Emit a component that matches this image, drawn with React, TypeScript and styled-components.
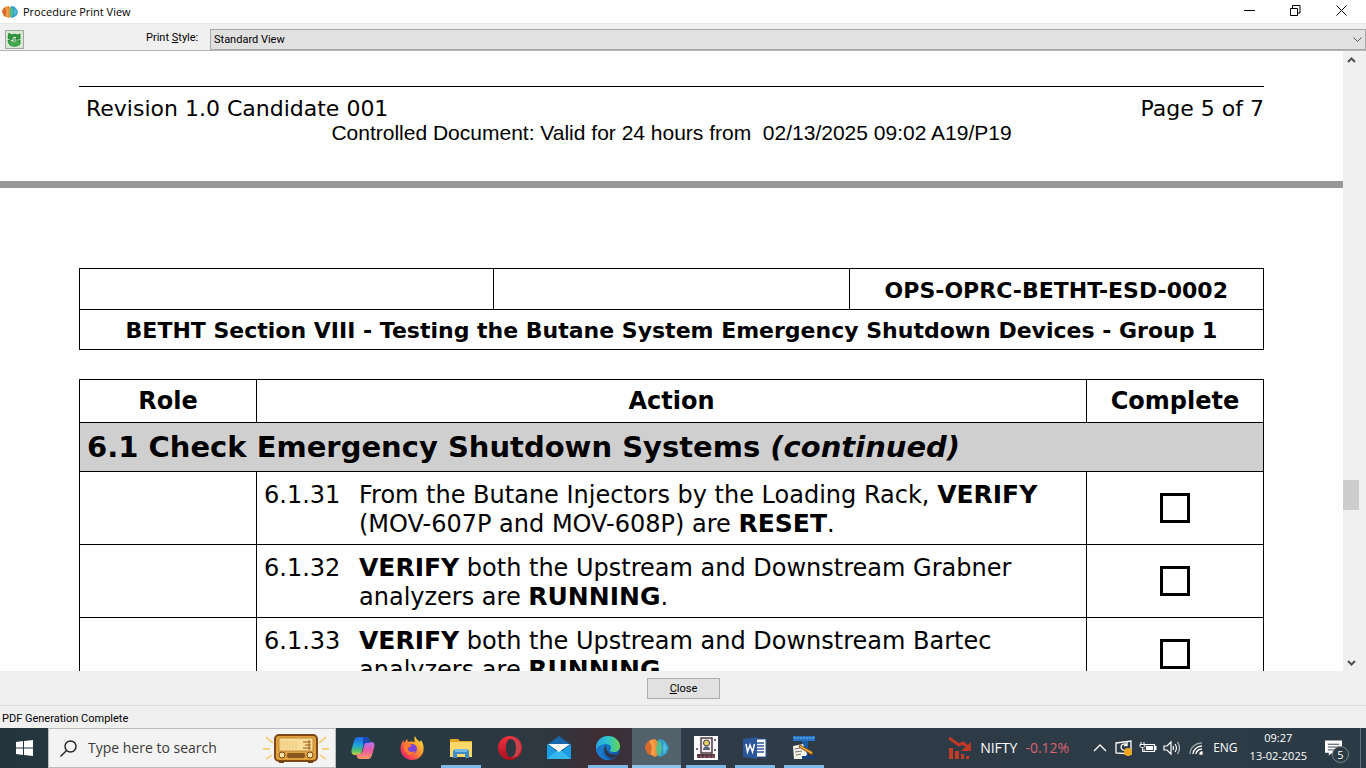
import React from "react";
import styled, { createGlobalStyle, css } from "styled-components";

const docFont = '"DejaVu Sans", Verdana, sans-serif';
const arialFont = '"Liberation Sans", Arial, sans-serif';
const uiFont = 'Roboto, "Liberation Sans", sans-serif';
const shellFont = '"Open Sans", "Segoe UI", sans-serif';

const GlobalStyle = createGlobalStyle`
  *, *::before, *::after { box-sizing: border-box; }
  body { margin: 0; background: #f0f0f0; color: #000; }
  button, input, select { font: inherit; color: inherit; margin: 0; }
  svg { display: block; flex: none; }
`;

const Desktop = styled.div`
  display: flex;
  flex-direction: column;
  height: 100vh;
  overflow: hidden;
  font: 11px/14px ${uiFont};
`;

/* ---------- title bar ---------- */
const TitleBar = styled.header`
  display: flex;
  align-items: center;
  height: 23px;
  padding: 0 2px;
  background: #fff;
`;
const WindowTitle = styled.h1`
  flex: 1;
  margin: 0 0 0 5px;
  font: 400 11px/16px ${shellFont};
`;
const CaptionButton = styled.button`
  display: flex;
  align-items: center;
  align-self: flex-start;
  justify-content: center;
  width: 46px;
  height: 20px;
  padding: 0;
  border: 0;
  background: none;
`;

/* ---------- tool bar ---------- */
const ToolBar = styled.div`
  display: flex;
  align-items: center;
  height: 28px;
  padding: 4px 0 0 5px;
  border-top: 1px solid #e8e8e8;
  border-bottom: 1px solid #b4b4b4;
  background: #f0f0f0;
`;
const RefreshButton = styled.button`
  display: flex;
  align-items: center;
  justify-content: center;
  width: 19px;
  height: 19px;
  padding: 0;
  border: 1px solid #a4a4a4;
  background: #d5e9d0;
`;
const StyleLabel = styled.label`
  width: 64px;
  margin-left: 122px;
  padding-bottom: 3px;
`;
const SelectWrap = styled.div`
  display: flex;
  position: relative;
  flex: 1;
`;
const StyleSelect = styled.select`
  flex: 1;
  height: 21px;
  padding: 1px 20px 0 3px;
  border: 1px solid #a8a8a8;
  border-radius: 0;
  background: #e1e1e1;
  appearance: none;
`;
const SelectArrow = styled.span`
  position: absolute;
  right: 4px;
  top: 8px;
  pointer-events: none;
`;

/* ---------- document ---------- */
const Viewer = styled.main`
  display: flex;
  flex: 1;
  min-height: 0;
`;
const Pages = styled.div`
  flex: 1;
  overflow: hidden;
  background: #fefefe;
  font: 24px/29px ${docFont};
`;
const PageEnd = styled.section`
  height: 130px;
  padding: 35px 79px 0;
`;
const PageBreak = styled.hr`
  height: 7px;
  margin: 0;
  border: 0;
  background: #999;
`;
const PageStart = styled.section`
  padding: 80px 79px 0;
`;
const FooterLine = styled.div`
  display: flex;
  justify-content: space-between;
  padding: 7px 0 0 7px;
  border-top: 1px solid #000;
  font-size: 22px;
`;
const Validity = styled.p`
  margin: 0;
  font: 21px/20px ${arialFont};
  text-align: center;
  white-space: pre;
`;
const DocTable = styled.table`
  width: 100%;
  border-collapse: collapse;
  table-layout: fixed;
  th, td { border: 1px solid #000; padding: 0; }
`;
const HeadingTable = styled(DocTable)`
  margin-bottom: 29px;
  font-size: 22px;
  th { padding: 7px 0 4px; white-space: nowrap; }
  tr + tr th { padding: 6px 0 4px; }
`;
const Column = styled.col<{ $width?: string }>`
  width: ${(p) => p.$width ?? "auto"};
`;
const ColumnHead = styled.th`
  && { padding: 7px 0 6px; }
`;
const SectionHead = styled.th`
  && { padding: 7px 7px 6px; }
  background: #d0cfd0;
  font-size: 29px;
  line-height: 35px;
  text-align: left;
`;
const ActionCell = styled.td`
  vertical-align: top;
`;
const Step = styled.div`
  display: flex;
  padding: 9px 7px 5px;
  b { font-size: 25px; line-height: 25px; }
`;
const StepNumber = styled.span`
  flex: none;
  width: 95px;
`;
const CheckCell = styled.td`
  vertical-align: middle;
`;
const Check = styled.input`
  display: block;
  width: 30px;
  height: 30px;
  margin: 0 auto;
  border: 3px solid #000;
  background: #fff;
  appearance: none;
`;

/* ---------- scroll bar ---------- */
const ScrollBar = styled.div`
  display: flex;
  flex-direction: column;
  width: 23px;
  padding-right: 7px;
  background: #f0f0f0;
`;
const ScrollButton = styled.button`
  display: flex;
  align-items: center;
  justify-content: center;
  height: 17px;
  padding: 0;
  border: 0;
  background: none;
`;
const Track = styled.div`
  display: flex;
  flex-direction: column;
  flex: 1;
`;
const TrackGap = styled.div<{ $grow: number }>`
  flex: ${(p) => p.$grow};
`;
const Thumb = styled.div`
  height: 30px;
  background: #cdcdcd;
`;

/* ---------- bottom of the window ---------- */
const ActionBar = styled.div`
  display: flex;
  align-items: center;
  justify-content: center;
  height: 35px;
  border-bottom: 1px solid #dcdcdc;
`;
const CloseButton = styled.button`
  width: 73px;
  height: 21px;
  padding: 1px 0 0 1px;
  border: 1px solid #adadad;
  background: #e1e1e1;
`;
const StatusBar = styled.footer`
  height: 22px;
  padding: 6px 2px 0;
`;

/* ---------- task bar ---------- */
const TaskBar = styled.nav`
  display: flex;
  align-items: stretch;
  height: 40px;
  background: linear-gradient(90deg, #24353e 0, #283a42 28%, #2e3841 40%, #402c33 44%, #2f3b46 49%, #2b3b46 100%);
  color: #fff;
  font: 12px/18px ${shellFont};
`;
const StartButton = styled.button`
  display: flex;
  align-items: center;
  justify-content: center;
  width: 48px;
  padding: 0;
  border: 0;
  background: none;
`;
const SearchBox = styled.label`
  display: flex;
  align-items: center;
  width: 288px;
  margin-right: 2px;
  padding: 0 4px 0 11px;
  border: 1px solid #b8bcbe;
  background: #f3f3f3;
  color: #333;
`;
const SearchInput = styled.input`
  flex: 1;
  min-width: 0;
  margin-left: 11px;
  padding: 0;
  border: 0;
  outline: 0;
  background: none;
  font-size: 14px;
  &::placeholder { color: #3a3a3a; opacity: 1; }
`;
const TaskButton = styled.button<{ $open?: boolean; $active?: boolean }>`
  display: flex;
  align-items: center;
  justify-content: center;
  width: 49px;
  padding: 0 4px;
  border: 0;
  background: none;
  ${(p) => p.$open && css`
    background: linear-gradient(#7db9e8, #7db9e8) bottom / 40px 3px no-repeat;
  `}
  ${(p) => p.$active && css`
    background: linear-gradient(#8ac4ee, #8ac4ee) bottom / 49px 3px no-repeat, #53616a;
  `}
`;
const Tray = styled.div`
  display: flex;
  align-items: center;
  margin-left: auto;
`;
const NewsButton = styled.button`
  display: flex;
  align-items: center;
  gap: 8px;
  margin-right: 19px;
  padding: 0;
  border: 0;
  background: none;
  font-size: 14px;
`;
const Change = styled.span`
  color: #d9646f;
`;
const TrayIcons = styled.div`
  display: grid;
  grid-auto-flow: column;
  grid-auto-columns: 24px;
  align-items: center;
  justify-items: center;
`;
const Language = styled.span`
  margin-left: 5px;
`;
const Clock = styled.time`
  margin-left: 12px;
  padding-bottom: 2px;
  font-size: 11px;
  text-align: center;
`;
const NoticeButton = styled.button`
  display: flex;
  align-items: flex-start;
  position: relative;
  width: 30px;
  height: 40px;
  margin: 0 6px 0 17px;
  padding: 12px 0 0 1px;
  border: 0;
  background: none;
`;
const NoticeCount = styled.span`
  position: absolute;
  right: 5px;
  top: 18px;
  width: 17px;
  height: 17px;
  border: 1px solid #7b868c;
  border-radius: 50%;
  background: #2c3a44;
  font-size: 11px;
  line-height: 15px;
`;
const PeekEdge = styled.span`
  width: 6px;
  align-self: stretch;
  border-left: 1px solid #65717a;
`;

/* ---------- drawings ---------- */
const AppLogo = ({ size }: { size: number }) => (
  <svg width={size} height={size} viewBox="0 0 24 24">
    <path d="M10 3l3 3v13l-3 2-4-2-3-1-2-4-1-3 2-4 3-3z" fill="#ef8f35" />
    <path d="M4 5l3 5-1 9-3-1-3-7 2-4z" fill="#d9692c" />
    <path d="M8 4l2 8-1 8-3-2 1-7-2-6z" fill="#f3a04c" />
    <path d="M14 3l5 1 3 4 2 4-2 5-4 3-4 1-2-3V6z" fill="#2f9fc6" />
    <path d="M13 4l3 3 1 6-2 7-3-2-1-6z" fill="#58bd8d" />
    <path d="M19 6l3 6-3 6-1-6z" fill="#55bfe2" />
  </svg>
);
const RefreshIcon = () => (
  <svg width="15" height="15" viewBox="0 0 15 15">
    <path d="M2 1l2 2c2-1 5-1 7 0l2-1v5H9l1-2c-2-1-4-1-5 1L4 8 1 6z" fill="#2c9b3a" stroke="#116b20" strokeWidth=".7" />
    <path d="M13 8v4c-3 3-8 3-11 0L1 8l3 1c1 2 5 3 7 0z" fill="#41b04d" stroke="#116b20" strokeWidth=".7" />
    <path d="M5 7h5v2H6" fill="none" stroke="#1f8b2f" />
  </svg>
);
const Radio = () => (
  <svg width="70" height="36" viewBox="0 0 70 36">
    <g stroke="#f3d384" strokeWidth="2" fill="none">
      <path d="M5 7l7 6M2 19h7M5 29l6-4M65 7l-7 6M68 19h-7M65 29l-6-4" />
    </g>
    <rect x="14" y="5" width="42" height="26" rx="4" fill="#dfa13c" stroke="#7d4816" strokeWidth="2" />
    <rect x="18" y="8" width="34" height="13" rx="1" fill="#f8dc97" stroke="#c08a3c" />
    <path d="M20 11v8M23 11v8M26 11v8M29 11v8M32 11v8M35 11v8" stroke="#eac678" />
    <path d="M42 12h8M44 15h6M42 18h8M48 10v10" stroke="#9b5a1e" />
    <circle cx="21" cy="25" r="3" fill="#fbe2a0" stroke="#7d4816" />
    <circle cx="49" cy="25" r="3" fill="#fbe2a0" stroke="#7d4816" />
    <rect x="26" y="23" width="18" height="5" rx="2" fill="#8b5821" />
    <path d="M18 31v2h5v-2M47 31v2h5v-2" fill="#6b3e14" />
  </svg>
);
const Copilot = () => (
  <svg width="24" height="24" viewBox="0 0 24 24">
    <defs>
      <linearGradient id="cpA" x1="0" y1="0" x2="0" y2="1"><stop stopColor="#2268e0" /><stop offset=".45" stopColor="#20a0e0" /><stop offset=".75" stopColor="#4cc06c" /><stop offset="1" stopColor="#d8d040" /></linearGradient>
      <linearGradient id="cpB" x1="0" y1="0" x2="0" y2="1"><stop stopColor="#b070f0" /><stop offset=".5" stopColor="#ee5ba4" /><stop offset="1" stopColor="#fb9a5e" /></linearGradient>
    </defs>
    <path d="M7 1h8c3 0 3 3 4 6h-3c-2 0-3 1-4 4l-1 4c-1 3-2 4-4 4H4c-4 0-4-4-3-7l2-7c1-3 2-4 4-4z" fill="url(#cpA)" />
    <path d="M17 23H9c-3 0-3-3-4-5h3c2 0 3-1 4-4l1-4c1-3 2-4 4-4h3c4 0 4 3 3 6l-2 7c-1 3-2 4-4 4z" fill="url(#cpB)" />
    <path d="M12 1h3c3 0 3 3 4 6h-3c-2 0-3 0-4 3z" fill="#1b4bb8" />
  </svg>
);
const Firefox = () => (
  <svg width="24" height="24" viewBox="0 0 24 24">
    <defs><linearGradient id="ff" x1="1" y1="0" x2="0" y2="1"><stop stopColor="#fff04a" /><stop offset=".4" stopColor="#ff9a2a" /><stop offset=".75" stopColor="#ff3b57" /><stop offset="1" stopColor="#e01f8c" /></linearGradient></defs>
    <path d="M15 0c1 3 3 4 5 6l1-2c2 3 3 6 2.500 10C23 20 18 24 12 24S.5 19 .5 12.500C.5 9 2 6 3.500 4L4 7l3-4 1 3c3-1 6 0 7 0-1-2-1-4 0-6z" fill="url(#ff)" />
    <circle cx="12" cy="13" r="5" fill="#7a45dc" />
    <path d="M4 9c3-2 5 0 8 0-1 2-4 2-4 4 0 3 4 4 7 2-1 4-6 5-9 2-2-2-2-5-2-8z" fill="#ff7d2c" />
  </svg>
);
const Explorer = () => (
  <svg width="24" height="24" viewBox="0 0 24 24">
    <path d="M1 3h8l2 2h12v6H1z" fill="#e5a823" />
    <path d="M1 6h22v15H1z" fill="#fbd867" />
    <path d="M6 13h12l2 2v7h-4v-4H8v4H4v-7z" fill="#3f8dcb" />
    <path d="M6 13h12v3H6z" fill="#75b9e6" />
  </svg>
);
const Opera = () => (
  <svg width="24" height="24" viewBox="0 0 24 24">
    <defs><linearGradient id="op" x1="0" y1="0" x2="0" y2="1"><stop stopColor="#f5323f" /><stop offset="1" stopColor="#a80f1e" /></linearGradient></defs>
    <path fillRule="evenodd" d="M12 0a12 12 0 1 1 0 24a12 12 0 1 1 0-24zM13 3c-4 0-5 5-5 9s1 9 5 9 5-5 5-9-1-9-5-9z" fill="url(#op)" />
    <path d="M13 3c4 0 5 5 5 9s-1 9-5 9c4 2 10-3 10-9S17 1 13 3z" fill="#c9424c" />
  </svg>
);
const Mail = () => (
  <svg width="26" height="24" viewBox="0 0 26 24">
    <path d="M1 9L13 0l12 9v4H1z" fill="#1767ad" />
    <path d="M1 8l12 9L25 8v15H1z" fill="#1a9ce2" />
    <path d="M1 23l12-10 12 10z" fill="#35b8f1" />
    <path d="M2 8h22L13 16z" fill="#f6f8f8" />
  </svg>
);
const Edge = () => (
  <svg width="26" height="26" viewBox="0 0 26 26">
    <defs>
      <linearGradient id="edA" x1="0" y1="0" x2="1" y2="0"><stop stopColor="#2aa5e2" /><stop offset=".5" stopColor="#2cc3cf" /><stop offset="1" stopColor="#65d74b" /></linearGradient>
      <linearGradient id="edB" x1="0" y1="0" x2="1" y2="1"><stop stopColor="#1a94dd" /><stop offset="1" stopColor="#1249a2" /></linearGradient>
    </defs>
    <circle cx="13" cy="13" r="12" fill="url(#edB)" />
    <path d="M1 13C1 6 6 1 13 1s12 5 12 10c0 4-3 6-6 6-3 0-5-1-4-2 2-2 1-6-4-6-5 0-9 3-10 7z" fill="url(#edA)" />
    <path d="M11 10c-4 4-1 12 5 13 3 0 6-2 7-4-3 1-8 1-10-2-2-2-2-5-2-7z" fill="#2b3543" />
    <path d="M9 11c-4 5-1 12 6 14-7 1-13-4-14-11 2-3 5-4 8-3z" fill="#1b78cb" />
  </svg>
);
const Wizard = () => (
  <svg width="24" height="24" viewBox="0 0 24 24">
    <path fill="#fafafa" d="M0 0h24v24H0z" />
    <path d="M7 2h11v15H7z" fill="#f4ecec" stroke="#4c3b45" strokeWidth="1.500" />
    <circle cx="12.500" cy="7" r="3" fill="#e7cf62" stroke="#383b4a" />
    <path d="M9 14c0-5 7-5 7 0z" fill="#59657a" />
    <path d="M3 18h18v4H3z" fill="#84505b" />
    <path d="M3 19h18M5 22v-4M9 22v-4M13 22v-4M17 22v-4" stroke="#3b2a38" />
    <path d="M2 12h2v2H2zM20 3h2v2h-2zM20 13h2v2h-2z" fill="#77647f" />
  </svg>
);
const Word = () => (
  <svg width="24" height="22" viewBox="0 0 24 22">
    <path d="M11 2h12v18H11z" fill="#fff" stroke="#2b579a" />
    <path d="M14 6h7M14 9h7M14 12h7M14 15h7" stroke="#2b579a" strokeWidth="1.400" />
    <path d="M0 2L14 0v22L0 20z" fill="#2b579a" />
    <path d="M3 7l1.500 8L7 8l2.500 7L11.500 7" fill="none" stroke="#fff" strokeWidth="1.500" />
  </svg>
);
const Drafting = () => (
  <svg width="24" height="24" viewBox="0 0 24 24">
    <path d="M1 0h22v5H1z" fill="#2573c3" />
    <path d="M2 2h20" stroke="#7cbcf1" strokeDasharray="2 1" />
    <path d="M10 5h6v18h-6z" fill="#1c5ba5" />
    <path d="M1 10l10-2 4 10-3 5H2z" fill="#f4f1e7" />
    <path d="M3 13l5-1M3 16l7-1M4 19l5-1" stroke="#737373" />
    <path d="M8 9l13 7-1 3L7 11z" fill="#f0a22f" stroke="#633b16" strokeWidth=".8" />
    <path d="M10 20h13v3H10z" fill="#16407b" />
  </svg>
);
const Falling = () => (
  <svg width="24" height="24" viewBox="0 0 24 24">
    <path d="M1 2l10 7 4-2 6 5" fill="none" stroke="#bf3828" strokeWidth="3" />
    <path d="M23 6v9H13z" fill="#bf3828" />
    <path d="M1 12h4v11H1zM7 15h4v8H7zM13 18h3v5h-3zM18 20h3v3h-3z" fill="#c23b22" />
  </svg>
);
const Sync = () => (
  <svg width="18" height="18" viewBox="0 0 18 18" fill="none" stroke="#fff" strokeWidth="1.300">
    <path d="M1 4l15-2v13L1 14z" />
    <path d="M12 6c-2-2-6-1-6 2s3 4 5 3M12 3v3.500H9" />
    <circle cx="13" cy="13" r="4" fill="#f2a51e" stroke="none" />
  </svg>
);
const Battery = () => (
  <svg width="18" height="16" viewBox="0 0 18 16">
    <path d="M6 4.500h9.500v7H5V9" fill="none" stroke="#fff" strokeWidth="1.200" />
    <path d="M7 6h7v4H7zM16 6h1.500v4H16z" fill="#fff" />
    <path d="M2 2v2M5 2v2M1 4.500h5V6c0 2-5 2-5 0zM3.500 8v3.500H5" fill="#2b3b46" stroke="#fff" />
  </svg>
);
const Speaker = () => (
  <svg width="18" height="16" viewBox="0 0 18 16" fill="none" stroke="#fff" strokeWidth="1.200">
    <path d="M1 6h3l4-4v12l-4-4H1zM10 6q1 2 0 4M12 4q3 4 0 8" />
    <path d="M14.500 2q4 6 0 12" stroke="#bcc3c7" />
  </svg>
);
const Wifi = () => (
  <svg width="15" height="16" viewBox="0 0 15 16" fill="none" strokeWidth="1.300">
    <path d="M1 14C1 8 6 3 13 3" stroke="#98a3a9" />
    <path d="M4 14c0-4 4-8 9-8M7 14c0-3 3-5 6-5" stroke="#fff" />
    <path d="M11 14c0-1 1-2 2-2v2z" fill="#fff" stroke="#fff" />
  </svg>
);

interface StepRow {
  id: string;
  text: React.ReactNode;
}
const steps: StepRow[] = [
  { id: "6.1.31", text: <>From the Butane Injectors by the Loading Rack, <b>VERIFY</b><br />(MOV-607P and MOV-608P) are <b>RESET</b>.</> },
  { id: "6.1.32", text: <><b>VERIFY</b> both the Upstream and Downstream Grabner<br />analyzers are <b>RUNNING</b>.</> },
  { id: "6.1.33", text: <><b>VERIFY</b> both the Upstream and Downstream Bartec<br />analyzers are <b>RUNNING</b>.</> },
];

interface Task {
  name: string;
  icon: React.ReactNode;
  open?: boolean;
  active?: boolean;
}
const tasks: Task[] = [
  { name: "Copilot", icon: <Copilot /> },
  { name: "Firefox", icon: <Firefox /> },
  { name: "File Explorer", icon: <Explorer />, open: true },
  { name: "Opera", icon: <Opera /> },
  { name: "Mail", icon: <Mail /> },
  { name: "Edge", icon: <Edge />, open: true },
  { name: "Procedure Print View", icon: <AppLogo size={24} />, open: true, active: true },
  { name: "Wizard", icon: <Wizard />, open: true },
  { name: "Word", icon: <Word />, open: true },
  { name: "Drafting", icon: <Drafting />, open: true },
];

export default function App() {
  return (
    <Desktop>
      <GlobalStyle />
      <TitleBar>
        <AppLogo size={16} />
        <WindowTitle>Procedure Print View</WindowTitle>
        <CaptionButton aria-label="Minimize">
          <svg width="11" height="11"><path d="M0 5.500h11" stroke="#000" /></svg>
        </CaptionButton>
        <CaptionButton aria-label="Restore">
          <svg width="11" height="11" fill="none" stroke="#000"><path d="M.5 3.500h7v7h-7zM2.500 3V.5h7.500v7.500H8" /></svg>
        </CaptionButton>
        <CaptionButton aria-label="Close window">
          <svg width="11" height="11"><path d="M.5.5l10 10M10.500.5l-10 10" stroke="#000" /></svg>
        </CaptionButton>
      </TitleBar>

      <ToolBar>
        <RefreshButton aria-label="Refresh"><RefreshIcon /></RefreshButton>
        <StyleLabel htmlFor="print-style">Print <u>S</u>tyle:</StyleLabel>
        <SelectWrap>
          <StyleSelect id="print-style" defaultValue="standard">
            <option value="standard">Standard View</option>
          </StyleSelect>
          <SelectArrow>
            <svg width="9" height="6"><path d="M.5.5l4 4 4-4" fill="none" stroke="#555" /></svg>
          </SelectArrow>
        </SelectWrap>
      </ToolBar>

      <Viewer>
        <Pages>
          <PageEnd>
            <FooterLine>
              <span>Revision 1.0 Candidate 001</span>
              <span>Page 5 of 7</span>
            </FooterLine>
            <Validity>{"Controlled Document: Valid for 24 hours from  02/13/2025 09:02 A19/P19"}</Validity>
          </PageEnd>
          <PageBreak />
          <PageStart>
            <HeadingTable>
              <colgroup><Column $width="35%" /><Column $width="30%" /><Column $width="35%" /></colgroup>
              <tbody>
                <tr><td /><td /><th>OPS-OPRC-BETHT-ESD-0002</th></tr>
                <tr><th colSpan={3}>BETHT Section VIII - Testing the Butane System Emergency Shutdown Devices - Group 1</th></tr>
              </tbody>
            </HeadingTable>
            <DocTable>
              <colgroup><Column $width="177px" /><Column /><Column $width="177px" /></colgroup>
              <thead>
                <tr><ColumnHead>Role</ColumnHead><ColumnHead>Action</ColumnHead><ColumnHead>Complete</ColumnHead></tr>
              </thead>
              <tbody>
                <tr><SectionHead colSpan={3}>6.1 Check Emergency Shutdown Systems <em>(continued)</em></SectionHead></tr>
                {steps.map((s) => (
                  <tr key={s.id}>
                    <td />
                    <ActionCell>
                      <Step><StepNumber>{s.id}</StepNumber><span>{s.text}</span></Step>
                    </ActionCell>
                    <CheckCell><Check type="checkbox" aria-label={`${s.id} complete`} /></CheckCell>
                  </tr>
                ))}
              </tbody>
            </DocTable>
          </PageStart>
        </Pages>
        <ScrollBar>
          <ScrollButton aria-label="Scroll up">
            <svg width="9" height="6"><path d="M1 5l3.500-3.500L8 5" fill="none" stroke="#505050" strokeWidth="2" /></svg>
          </ScrollButton>
          <Track>
            <TrackGap $grow={412} /><Thumb /><TrackGap $grow={144} />
          </Track>
          <ScrollButton aria-label="Scroll down">
            <svg width="9" height="6"><path d="M1 1l3.500 3.500L8 1" fill="none" stroke="#505050" strokeWidth="2" /></svg>
          </ScrollButton>
        </ScrollBar>
      </Viewer>

      <ActionBar><CloseButton><u>C</u>lose</CloseButton></ActionBar>
      <StatusBar>PDF Generation Complete</StatusBar>

      <TaskBar>
        <StartButton aria-label="Start">
          <svg width="17" height="16" viewBox="0 0 17 16"><path d="M0 2l7-1v6.500H0zM8 1l9-1v7.500H8zM0 8.500h7V15l-7-1zM8 8.500h9V16l-9-1z" fill="#fff" /></svg>
        </StartButton>
        <SearchBox>
          <svg width="17" height="17" viewBox="0 0 17 17" fill="none" stroke="#222" strokeWidth="1.400"><circle cx="10.500" cy="6.500" r="5.500" /><path d="M6.500 10.500L.5 16.500" /></svg>
          <SearchInput type="text" placeholder="Type here to search" aria-label="Search" />
          <Radio />
        </SearchBox>
        {tasks.map((t) => (
          <TaskButton key={t.name} aria-label={t.name} $open={t.open} $active={t.active}>{t.icon}</TaskButton>
        ))}
        <Tray>
          <NewsButton><Falling /><span>NIFTY</span><Change>-0.12%</Change></NewsButton>
          <TrayIcons>
            <svg width="14" height="10"><path d="M1 8l6-6 6 6" fill="none" stroke="#fff" strokeWidth="1.300" /></svg>
            <Sync /><Battery /><Speaker /><Wifi />
          </TrayIcons>
          <Language>ENG</Language>
          <Clock>09:27<br />13-02-2025</Clock>
          <NoticeButton aria-label="Notifications, 5 new">
            <svg width="17" height="16" viewBox="0 0 18 16"><path d="M0 0h18v13H8l-4 3v-3H0z" fill="#fff" /><path d="M3 4h12M3 7h12M3 10h8" stroke="#2c3a44" /></svg>
            <NoticeCount>5</NoticeCount>
          </NoticeButton>
          <PeekEdge />
        </Tray>
      </TaskBar>
    </Desktop>
  );
}
